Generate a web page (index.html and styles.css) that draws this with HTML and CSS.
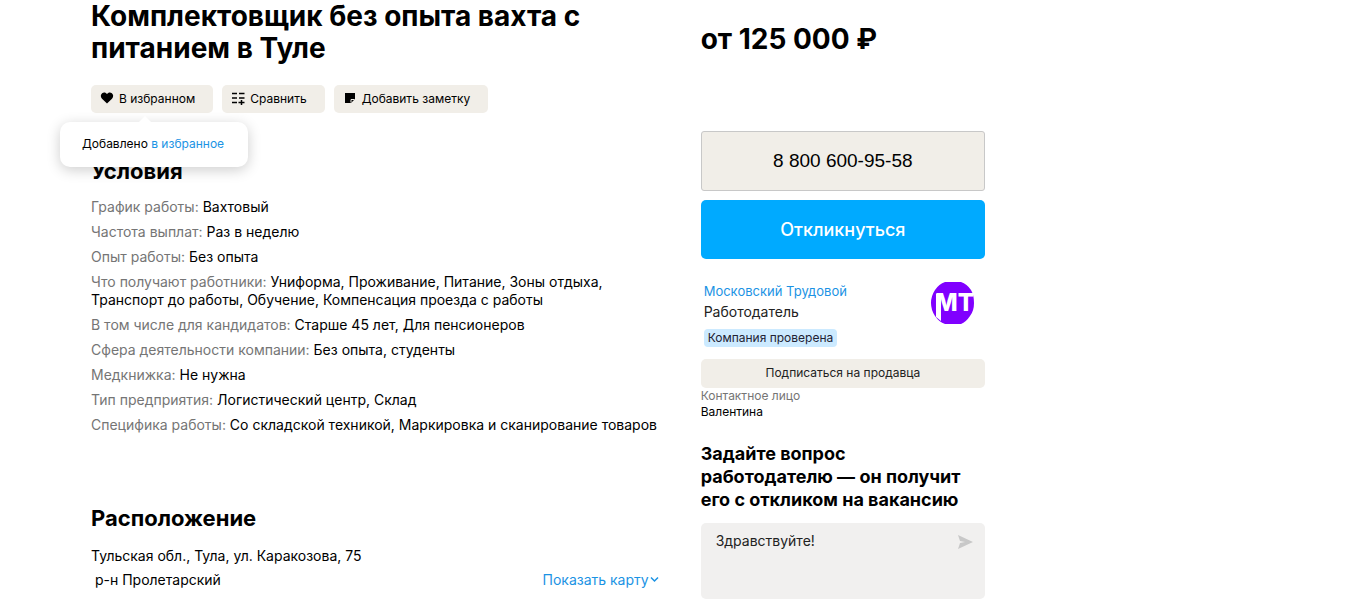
FILE: index.html
```html
<!DOCTYPE html>
<html lang="ru">

<head>
    <meta charset="utf-8">
    <meta name="viewport" content="width=device-width, initial-scale=1">
    <title>Комплектовщик без опыта вахта с питанием в Туле</title>
    <link rel="stylesheet" href="styles.css">
</head>

<body>
    <div class="page">
        <main class="vacancy">
            <h1 class="title">Комплектовщик без опыта вахта с питанием в Туле</h1>
            <div class="actions">
                <button class="action-btn" type="button">
                    <svg class="icon" width="14" height="14" viewBox="0 0 14 14"><path d="M7 12.6 2 7.7C.3 6 .5 3.400 2.100 2.200 3.700.9 5.900 1.300 7 3c1.100-1.700 3.300-2.100 4.900-.8 1.600 1.200 1.800 3.800.1 5.500z"/></svg>
                    <span>В избранном</span>
                </button>
                <button class="action-btn" type="button">
                    <svg class="icon" width="14" height="14" viewBox="0 0 14 14" fill="none" stroke="#000" stroke-width="1.500"><path d="M1 2.500h5M8 2.500h5.500M1 7h5M8 7h5.500M1 11.500h5M7.500 11.500h6M10.500 9v5"/></svg>
                    <span>Сравнить</span>
                </button>
                <button class="action-btn" type="button">
                    <svg class="icon" width="14" height="14" viewBox="0 0 14 14"><path d="M2 2h10v6l-4 4H2z"/><path d="M8 11.500V8.500h3.500" fill="none" stroke="#f1eee8"/></svg>
                    <span>Добавить заметку</span>
                </button>
                <div class="tooltip">Добавлено <a href="#">в избранное</a></div>
            </div>

            <section class="conditions">
                <h2 class="section-title">Условия</h2>
                <ul class="params">
                    <li><span>График работы:</span> Вахтовый</li>
                    <li><span>Частота выплат:</span> Раз в неделю</li>
                    <li><span>Опыт работы:</span> Без опыта</li>
                    <li><span>Что получают работники:</span> Униформа, Проживание, Питание, Зоны отдыха, Транспорт до работы, Обучение, Компенсация проезда с работы</li>
                    <li><span>В том числе для кандидатов:</span> Старше 45 лет, Для пенсионеров</li>
                    <li><span>Сфера деятельности компании:</span> Без опыта, студенты</li>
                    <li><span>Медкнижка:</span> Не нужна</li>
                    <li><span>Тип предприятия:</span> Логистический центр, Склад</li>
                    <li><span>Специфика работы:</span> Со складской техникой, Маркировка и сканирование товаров</li>
                </ul>
            </section>

            <section class="location">
                <h2 class="section-title">Расположение</h2>
                <div class="address">Тульская обл., Тула, ул. Каракозова, 75</div>
                <div class="district">
                    <span>&nbsp;р-н Пролетарский</span>
                    <a class="map-link" href="#">Показать карту<svg width="11" height="10" viewBox="0 0 11 10" fill="none" stroke="currentColor" stroke-width="1.500"><path d="m2 2.500 3.500 3.500L9 2.500"/></svg></a>
                </div>
            </section>
        </main>

        <aside class="sidebar">
            <div class="price">от 125 000 ₽</div>
            <button class="phone-btn" type="button">8 800 600-95-58</button>
            <button class="apply-btn" type="button">Откликнуться</button>

            <div class="seller">
                <div class="seller-info">
                    <a class="seller-name" href="#">Московский Трудовой</a>
                    <div class="seller-role">Работодатель</div>
                    <span class="badge">Компания проверена</span>
                </div>
                <svg class="logo" width="44" height="42" viewBox="0 0 44 42">
                    <path d="M14 0h16q6 2 10 8 3 5 3 13t-4 13q-4 6-9 8H14q-6-2-10-8-4-6-4-13t4-13q4-6 10-8z" fill="#8000ff"/>
                    <path d="M5 12h5v27l-5-4z" fill="#fff"/>
                    <text class="logo-text" x="4" y="29">МТ</text>
                </svg>
            </div>
            <button class="subscribe-btn" type="button">Подписаться на продавца</button>
            <div class="contact-label">Контактное лицо</div>
            <div class="contact-name">Валентина</div>

            <form class="question">
                <label class="question-title" for="message">Задайте вопрос<br>работодателю — он получит его с откликом на вакансию</label>
                <div class="message-box">
                    <textarea class="message" id="message">Здравствуйте!</textarea>
                    <button class="send-btn" type="button" aria-label="Отправить">
                        <svg width="16" height="14" viewBox="0 0 16 14"><path d="M1 0 16 7 1 14 3 8l5-1-5-1z" fill="#c8c8c8"/></svg>
                    </button>
                </div>
            </form>
        </aside>
    </div>
</body>

</html>
```

FILE: styles.css
```css
* {
    box-sizing: border-box;
}
body {
    margin: 0;
    background: #fff;
    color: #000;
    font-family: Inter, "Open Sans", sans-serif;
    font-size: 14px;
    line-height: 18px;
}
a {
    color: #1b93e4;
    text-decoration: none;
}
button {
    border: 0;
    padding: 0;
    font-family: inherit;
    color: #000;
    cursor: pointer;
}
.page {
    display: grid;
    grid-template-columns: 2fr 1fr;
    gap: 41px;
    max-width: 985px;
    padding-left: 91px;
}
.title {
    margin: 0;
    font-size: 28px;
    line-height: 32px;
    font-weight: 700;
}
.actions {
    position: relative;
    display: flex;
    gap: 9px;
    margin-top: 21px;
}
.action-btn {
    display: flex;
    align-items: center;
    gap: 5px;
    height: 28px;
    padding: 0 18px 2px 9px;
    border-radius: 5px;
    background: #f1eee8;
    font-size: 12px;
}
.tooltip {
    position: absolute;
    top: 37px;
    left: -31px;
    padding: 13px 24px 14px 22px;
    border-radius: 10px;
    background: #fff;
    box-shadow: 0 3px 14px rgba(0, 0, 0, .2);
    font-size: 12px;
}
.tooltip::before {
    content: "";
    position: absolute;
    top: -6px;
    left: 78px;
    border: 7px solid transparent;
    border-top: 0;
    border-bottom-color: #fff;
}
.conditions {
    margin-top: 44px;
}
.section-title {
    margin: 0;
    font-size: 22px;
    line-height: 28px;
    font-weight: 700;
}
.params {
    list-style: none;
    margin: 13px 0 0;
    padding: 0;
}
.params li {
    margin-bottom: 7px;
}
.params span {
    color: #757575;
}
.location {
    margin-top: 70px;
    line-height: 24px;
}
.address {
    margin-top: 12px;
}
.district {
    display: flex;
    justify-content: space-between;
}
.sidebar {
    padding-top: 23px;
}
.price {
    font-size: 28px;
    line-height: 32px;
    font-weight: 700;
}
.phone-btn,
.apply-btn,
.subscribe-btn {
    display: block;
    width: 100%;
}
.phone-btn {
    height: 60px;
    margin-top: 76px;
    border: 1px solid #c8c8c8;
    border-radius: 3px;
    background: #f1eee8;
    font-family: "Liberation Sans", sans-serif;
    font-size: 19px;
}
.apply-btn {
    height: 59px;
    margin-top: 9px;
    border-radius: 5px;
    background: #00aaff;
    color: #fff;
    font-size: 18px;
    font-weight: 500;
}
.seller {
    display: flex;
    justify-content: space-between;
    align-items: flex-start;
    margin-top: 23px;
    padding: 0 10px 0 3px;
}
.seller-name {
    font-size: 13px;
}
.seller-role {
    margin: 3px 0 8px;
    color: #222;
}
.badge {
    display: block;
    width: max-content;
    padding: 0 4px;
    border-radius: 4px;
    background: #cceaff;
    color: #223;
    font-size: 12px;
}
.logo-text {
    fill: #fff;
    font-family: Inter, sans-serif;
    font-size: 24px;
    font-weight: 800;
}
.subscribe-btn {
    height: 29px;
    margin-top: 12px;
    padding-bottom: 3px;
    border-radius: 5px;
    background: #f1eee8;
    color: #222;
    font-size: 12px;
}
.contact-label,
.contact-name {
    font-size: 12px;
    line-height: 16px;
}
.contact-label {
    color: #757575;
}
.question {
    margin-top: 22px;
}
.question-title {
    display: block;
    font-size: 18px;
    line-height: 23px;
    font-weight: 700;
}
.message-box {
    position: relative;
    margin-top: 12px;
}
.message {
    display: block;
    width: 100%;
    height: 76px;
    padding: 9px 44px 9px 15px;
    border: 0;
    border-radius: 5px;
    background: #f1f0ef;
    color: #222;
    font: inherit;
    resize: none;
    outline: none;
}
.send-btn {
    position: absolute;
    top: 12px;
    right: 12px;
    height: 14px;
    background: none;
}
.send-btn svg {
    display: block;
}
```
